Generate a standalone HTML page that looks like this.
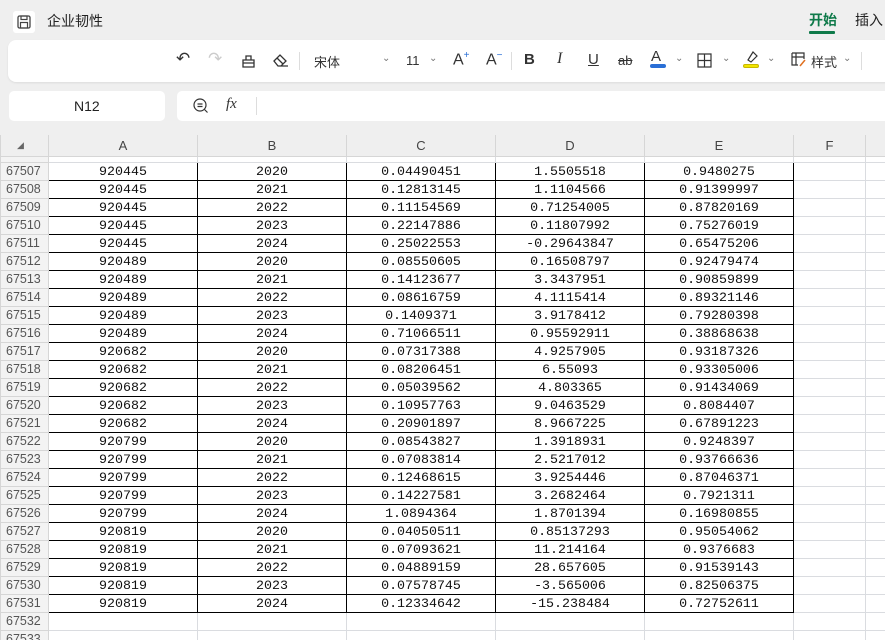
<!DOCTYPE html>
<html><head><meta charset="utf-8"><style>
*{margin:0;padding:0;box-sizing:border-box}
body{width:885px;height:640px;overflow:hidden;background:#efefef;font-family:"Liberation Sans","Noto Sans CJK SC",sans-serif;position:relative}
.abs{position:absolute}
.tb{top:40px;left:8px;width:890px;height:42px;background:#fff;border-radius:8px;box-shadow:0 1px 2px rgba(0,0,0,.08)}
.ic{position:absolute;top:50px;font-size:15px;color:#333}
.sep{position:absolute;top:52px;width:1px;height:18px;background:#ddd}
.chev{position:absolute;top:53px;font-size:10px;color:#777}
#grid{position:absolute;top:135px;left:0;background:#fff;width:885px;height:505px;overflow:hidden}
table{border-collapse:collapse;table-layout:fixed;position:absolute;left:0;width:905px}
td{height:18px;padding:0;text-align:center;font-family:"Liberation Mono","Noto Sans CJK SC",monospace;font-size:13.3px;color:#111;border:1px solid #dadce0;white-space:nowrap;overflow:hidden;line-height:17px}
td.h{background:#f3f3f3;color:#555;font-family:"Liberation Sans",sans-serif;font-size:12.5px;text-align:left;padding-left:5px;border-color:#d6d6d6}
td.d{border:1px solid #000}
tr.hd td{height:22px;background:#efefef;font-family:"Liberation Sans",sans-serif;color:#444;font-size:13px;border-color:#d6d6d6}
</style></head><body>
<div class="abs" style="left:13px;top:11px;width:22px;height:22px;background:#fff;border-radius:3px"></div>
<svg class="abs" style="left:15px;top:13px" width="18" height="18" viewBox="0 0 18 18"><rect x="3" y="3" width="12" height="12" rx="1.5" fill="none" stroke="#444" stroke-width="1.3"/><rect x="6" y="3" width="6" height="3.5" fill="none" stroke="#444" stroke-width="1.2"/><rect x="5.5" y="9.5" width="7" height="5.5" fill="none" stroke="#444" stroke-width="1.2"/></svg>
<div class="abs" style="left:47px;top:11px;font-size:14px;color:#222">企业韧性</div>
<div class="abs" style="left:809px;top:10px;font-size:14px;color:#0f7a4a;font-weight:bold">开始</div>
<div class="abs" style="left:809px;top:31px;width:26px;height:3px;background:#0f7a4a;border-radius:1px"></div>
<div class="abs" style="left:855px;top:10px;font-size:14px;color:#222">插入</div>
<div class="abs tb"></div>
<div class="ic" style="left:176px;font-size:17px;top:49px">↶</div>
<div class="ic" style="left:208px;font-size:17px;top:49px;color:#ccc">↷</div>
<svg class="abs" style="left:240px;top:52px" width="17" height="17" viewBox="0 0 17 17"><path d="M3 8h11v7H3zM6 8V4h5v4M3 11h11" fill="none" stroke="#333" stroke-width="1.3"/></svg>
<svg class="abs" style="left:272px;top:52px" width="18" height="17" viewBox="0 0 18 17"><path d="M2 9l6-6 6 6-5 5H6zM5 6l6 6M6 14h10" fill="none" stroke="#333" stroke-width="1.3"/></svg>
<div class="sep" style="left:299px"></div>
<div class="ic" style="left:314px;font-size:13px;top:52px">宋体</div>
<div class="chev" style="left:382px">⌄</div>
<div class="ic" style="left:406px;font-size:13px;top:53px">11</div>
<div class="chev" style="left:429px">⌄</div>
<div class="ic" style="left:453px;font-size:16px;top:50px">A<sup style="font-size:10px;color:#2a6fd6">+</sup></div>
<div class="ic" style="left:486px;font-size:16px;top:50px">A<sup style="font-size:10px;color:#2a6fd6">−</sup></div>
<div class="sep" style="left:511px"></div>
<div class="ic" style="left:524px;font-weight:bold;top:51px">B</div>
<div class="ic" style="left:557px;font-style:italic;font-family:'Liberation Serif',serif;font-size:16px">I</div>
<div class="ic" style="left:588px;text-decoration:underline;top:51px">U</div>
<div class="ic" style="left:618px;text-decoration:line-through;font-size:13px;top:53px">ab</div>
<div class="ic" style="left:651px;top:48px">A</div>
<div class="abs" style="left:650px;top:64px;width:16px;height:4px;background:#2a6fd6;border-radius:2px"></div>
<div class="chev" style="left:675px">⌄</div>
<svg class="abs" style="left:697px;top:53px" width="15" height="15"><path d="M1 1h13v13H1zM7.5 1v13M1 7.5h13" fill="none" stroke="#333" stroke-width="1.2"/></svg>
<div class="chev" style="left:722px">⌄</div>
<div class="abs" style="left:743px;top:64px;width:16px;height:4px;background:#f2e600;border-radius:2px;border:1px solid #c8b800"></div>
<svg class="abs" style="left:745px;top:50px" width="14" height="14"><path d="M3 10l5-8 4 4-6 6z" fill="none" stroke="#333" stroke-width="1.2"/></svg>
<div class="chev" style="left:767px">⌄</div>
<svg class="abs" style="left:791px;top:52px" width="16" height="16"><path d="M1 1h12v6M1 1v12h6M1 5h12M5 1v12" fill="none" stroke="#333" stroke-width="1.2"/><path d="M9 14l5-6" stroke="#e07020" stroke-width="1.5"/></svg>
<div class="ic" style="left:811px;font-size:13px;top:52px">样式</div>
<div class="chev" style="left:843px">⌄</div>
<div class="sep" style="left:861px"></div>
<div class="abs" style="left:9px;top:91px;width:156px;height:30px;background:#fff;border-radius:5px"></div>
<div class="abs" style="left:74px;top:98px;font-size:14px;color:#222">N12</div>
<div class="abs" style="left:177px;top:91px;width:720px;height:30px;background:#fff;border-radius:5px"></div>
<svg class="abs" style="left:192px;top:97px" width="18" height="18"><circle cx="8" cy="8" r="6" fill="none" stroke="#333" stroke-width="1.2"/><path d="M5.5 7h5M5.5 9.5h5M12.5 12.5l3 3" stroke="#333" stroke-width="1.2"/></svg>
<div class="abs" style="left:226px;top:96px;font-size:15px;font-style:italic;font-family:'Liberation Serif',serif;color:#333">fx</div>
<div class="abs" style="left:256px;top:97px;width:1px;height:18px;background:#ddd"></div>
<div id="grid">
<table style="top:-1px">
<colgroup><col style="width:48px"><col style="width:149px"><col style="width:149px"><col style="width:149px"><col style="width:149px"><col style="width:149px"><col style="width:72px"><col style="width:40px"></colgroup>
<tr class="hd"><td style="text-align:left;padding-left:16px;font-size:9px;color:#666">◢</td><td>A</td><td>B</td><td>C</td><td>D</td><td>E</td><td>F</td><td></td></tr>
<tr style="height:6px"><td class="h" style="height:6px"></td><td style="height:6px"></td><td style="height:6px"></td><td style="height:6px"></td><td style="height:6px"></td><td style="height:6px"></td><td style="height:6px"></td><td style="height:6px"></td></tr>
<tr><td class="h">67507</td><td class="d">920445</td><td class="d">2020</td><td class="d">0.04490451</td><td class="d">1.5505518</td><td class="d">0.9480275</td><td></td><td></td></tr>
<tr><td class="h">67508</td><td class="d">920445</td><td class="d">2021</td><td class="d">0.12813145</td><td class="d">1.1104566</td><td class="d">0.91399997</td><td></td><td></td></tr>
<tr><td class="h">67509</td><td class="d">920445</td><td class="d">2022</td><td class="d">0.11154569</td><td class="d">0.71254005</td><td class="d">0.87820169</td><td></td><td></td></tr>
<tr><td class="h">67510</td><td class="d">920445</td><td class="d">2023</td><td class="d">0.22147886</td><td class="d">0.11807992</td><td class="d">0.75276019</td><td></td><td></td></tr>
<tr><td class="h">67511</td><td class="d">920445</td><td class="d">2024</td><td class="d">0.25022553</td><td class="d">-0.29643847</td><td class="d">0.65475206</td><td></td><td></td></tr>
<tr><td class="h">67512</td><td class="d">920489</td><td class="d">2020</td><td class="d">0.08550605</td><td class="d">0.16508797</td><td class="d">0.92479474</td><td></td><td></td></tr>
<tr><td class="h">67513</td><td class="d">920489</td><td class="d">2021</td><td class="d">0.14123677</td><td class="d">3.3437951</td><td class="d">0.90859899</td><td></td><td></td></tr>
<tr><td class="h">67514</td><td class="d">920489</td><td class="d">2022</td><td class="d">0.08616759</td><td class="d">4.1115414</td><td class="d">0.89321146</td><td></td><td></td></tr>
<tr><td class="h">67515</td><td class="d">920489</td><td class="d">2023</td><td class="d">0.1409371</td><td class="d">3.9178412</td><td class="d">0.79280398</td><td></td><td></td></tr>
<tr><td class="h">67516</td><td class="d">920489</td><td class="d">2024</td><td class="d">0.71066511</td><td class="d">0.95592911</td><td class="d">0.38868638</td><td></td><td></td></tr>
<tr><td class="h">67517</td><td class="d">920682</td><td class="d">2020</td><td class="d">0.07317388</td><td class="d">4.9257905</td><td class="d">0.93187326</td><td></td><td></td></tr>
<tr><td class="h">67518</td><td class="d">920682</td><td class="d">2021</td><td class="d">0.08206451</td><td class="d">6.55093</td><td class="d">0.93305006</td><td></td><td></td></tr>
<tr><td class="h">67519</td><td class="d">920682</td><td class="d">2022</td><td class="d">0.05039562</td><td class="d">4.803365</td><td class="d">0.91434069</td><td></td><td></td></tr>
<tr><td class="h">67520</td><td class="d">920682</td><td class="d">2023</td><td class="d">0.10957763</td><td class="d">9.0463529</td><td class="d">0.8084407</td><td></td><td></td></tr>
<tr><td class="h">67521</td><td class="d">920682</td><td class="d">2024</td><td class="d">0.20901897</td><td class="d">8.9667225</td><td class="d">0.67891223</td><td></td><td></td></tr>
<tr><td class="h">67522</td><td class="d">920799</td><td class="d">2020</td><td class="d">0.08543827</td><td class="d">1.3918931</td><td class="d">0.9248397</td><td></td><td></td></tr>
<tr><td class="h">67523</td><td class="d">920799</td><td class="d">2021</td><td class="d">0.07083814</td><td class="d">2.5217012</td><td class="d">0.93766636</td><td></td><td></td></tr>
<tr><td class="h">67524</td><td class="d">920799</td><td class="d">2022</td><td class="d">0.12468615</td><td class="d">3.9254446</td><td class="d">0.87046371</td><td></td><td></td></tr>
<tr><td class="h">67525</td><td class="d">920799</td><td class="d">2023</td><td class="d">0.14227581</td><td class="d">3.2682464</td><td class="d">0.7921311</td><td></td><td></td></tr>
<tr><td class="h">67526</td><td class="d">920799</td><td class="d">2024</td><td class="d">1.0894364</td><td class="d">1.8701394</td><td class="d">0.16980855</td><td></td><td></td></tr>
<tr><td class="h">67527</td><td class="d">920819</td><td class="d">2020</td><td class="d">0.04050511</td><td class="d">0.85137293</td><td class="d">0.95054062</td><td></td><td></td></tr>
<tr><td class="h">67528</td><td class="d">920819</td><td class="d">2021</td><td class="d">0.07093621</td><td class="d">11.214164</td><td class="d">0.9376683</td><td></td><td></td></tr>
<tr><td class="h">67529</td><td class="d">920819</td><td class="d">2022</td><td class="d">0.04889159</td><td class="d">28.657605</td><td class="d">0.91539143</td><td></td><td></td></tr>
<tr><td class="h">67530</td><td class="d">920819</td><td class="d">2023</td><td class="d">0.07578745</td><td class="d">-3.565006</td><td class="d">0.82506375</td><td></td><td></td></tr>
<tr><td class="h">67531</td><td class="d">920819</td><td class="d">2024</td><td class="d">0.12334642</td><td class="d">-15.238484</td><td class="d">0.72752611</td><td></td><td></td></tr>
<tr><td class="h">67532</td><td></td><td></td><td></td><td></td><td></td><td></td><td></td></tr>
<tr><td class="h">67533</td><td></td><td></td><td></td><td></td><td></td><td></td><td></td></tr>
</table>
</div>
</body></html>
